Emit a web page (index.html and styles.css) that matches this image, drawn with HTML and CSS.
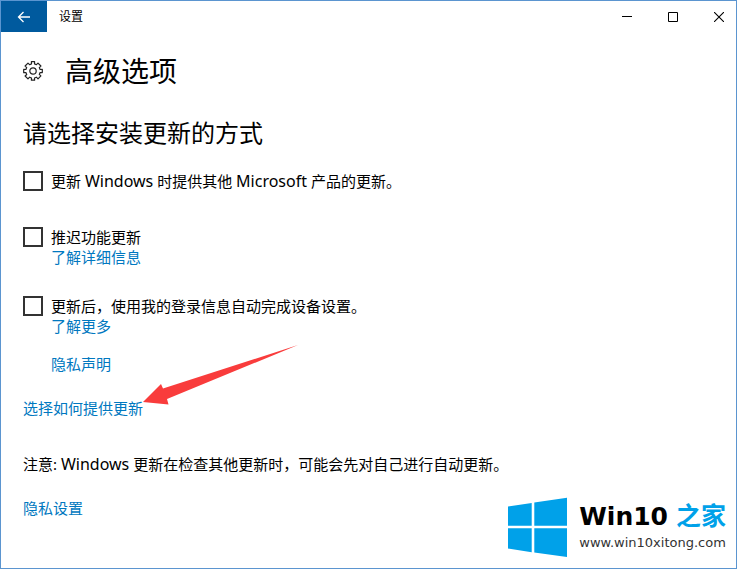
FILE: index.html
```html
<!DOCTYPE html>
<html lang="zh-CN">
<head>
  <meta charset="UTF-8">
  <meta name="viewport" content="width=device-width, initial-scale=1.0">
  <title>设置</title>
  <link rel="stylesheet" href="styles.css">
</head>
<body>
  <div class="window">
    <header class="title-bar">
      <button class="back" type="button" aria-label="返回">
        <svg width="14" height="12" viewBox="0 0 14 12"><path d="M13 6H1.500M6.500 1L1.500 6l5 5" fill="none" stroke="#fff" stroke-width="1.3"/></svg>
      </button>
      <span class="title">设置</span>
      <div class="window-controls">
        <button class="control-button" type="button" aria-label="最小化">
          <svg width="10" height="10" viewBox="0 0 10 10"><path d="M0 4.500h10" stroke="#000"/></svg>
        </button>
        <button class="control-button" type="button" aria-label="最大化">
          <svg width="10" height="10" viewBox="0 0 10 10"><path d="M.5.5h9v9h-9z" fill="none" stroke="#000"/></svg>
        </button>
        <button class="control-button" type="button" aria-label="关闭">
          <svg width="10" height="10" viewBox="0 0 10 10"><path d="M0 0l10 10M10 0L0 10" stroke="#000" stroke-width="1.1"/></svg>
        </button>
      </div>
    </header>

    <main class="content">
      <div class="page-head">
        <svg class="gear" width="20" height="20" viewBox="0 0 20 20" fill="none" stroke="#222" stroke-width="1.2" stroke-linejoin="round">
          <path d="M8.5 2.9L8.400 .7h3.2l-.1 2.2 1.9.8L15 2.100 17.900 5l-1.6 1.6.8 1.9 2.2-.1v3.2l-2.2-.1-.8 1.9 1.6 1.5-2.9 2.9-1.6-1.6-1.9.8.1 2.2H8.400l.1-2.2-1.9-.8L5 17.900 2.100 15l1.6-1.5-.8-1.9-2.2.1V8.400l2.2.1.8-1.9L2.100 5 5 2.100l1.6 1.6z"/>
          <circle cx="10" cy="10" r="3.2"/>
        </svg>
        <h1>高级选项</h1>
      </div>

      <h2>请选择安装更新的方式</h2>

      <div class="option">
        <input type="checkbox" id="other-products">
        <label for="other-products">更新 <span class="latin">Windows</span> 时提供其他 <span class="latin">Microsoft</span> 产品的更新。</label>
      </div>

      <div class="option">
        <input type="checkbox" id="defer">
        <label for="defer">推迟功能更新</label>
        <a href="#">了解详细信息</a>
      </div>

      <div class="option last">
        <input type="checkbox" id="sign-in">
        <label for="sign-in">更新后，使用我的登录信息自动完成设备设置。</label>
        <a href="#">了解更多</a>
      </div>

      <p class="indent"><a href="#">隐私声明</a></p>

      <p class="delivery">
        <a href="#">选择如何提供更新</a>
        <svg class="arrow" width="156" height="60" viewBox="0 0 156 60"><path d="M0 57L18 39l2 4.500L155 0 24 54l1.500 5.500z" fill="#f93c3c"/></svg>
      </p>

      <p class="note">注意: <span class="latin">Windows</span> 更新在检查其他更新时，可能会先对自己进行自动更新。</p>
      <p><a href="#">隐私设置</a></p>
    </main>

    <div class="brand">
      <svg width="59" height="60" viewBox="0 0 59 60" fill="#00a1e9">
        <path d="M0 9.500L23.700 6v22.800H0zM26.300 5.600L59 .7v28.100H26.300zM0 31.300h23.700v23.900L0 51.600zM26.300 31.300H59v28.600l-32.700-4.500z"/>
      </svg>
      <div class="brand-text">
        <div class="brand-name">Win10<span>之家</span></div>
        <div class="brand-url">www.win10xitong.com</div>
      </div>
    </div>
  </div>
</body>
</html>
```
FILE: styles.css
```css
* {
  box-sizing: border-box;
}

body {
  margin: 0;
  background-color: #fff;
  color: #000;
  font-family: "Noto Sans", "Noto Sans CJK SC", sans-serif;
  font-size: 15px;
  line-height: 20px;
}

.window {
  position: relative;
  min-height: 100vh;
  border: 1px solid #5b95d0;
}

.title-bar {
  display: flex;
  align-items: center;
  height: 31px;
}

.title-bar button {
  display: flex;
  align-items: center;
  justify-content: center;
  width: 46px;
  height: 31px;
  padding: 0;
  border: 0;
  background-color: transparent;
}

.title-bar .back {
  background-color: #005a9e;
}

.title {
  flex-grow: 1;
  padding-left: 12px;
  font-size: 12px;
}

.window-controls {
  display: flex;
  margin-right: -6px;
}

.content {
  padding: 19px 22px;
}

.page-head {
  display: flex;
  align-items: center;
  gap: 22px;
}

h1 {
  margin: 0;
  font-size: 28px;
  font-weight: normal;
  line-height: 40px;
}

h2 {
  margin: 26px 0 22px;
  font-size: 24px;
  font-weight: normal;
  line-height: 32px;
}

/* latin words run a little larger than the chinese text */
.latin {
  font-size: 16px;
}

.option {
  display: grid;
  grid-template-columns: 20px 1fr;
  column-gap: 8px;
  justify-items: start;
  margin-bottom: 36px;
}

.option + .last {
  margin-top: -7px;
  margin-bottom: 18px;
}

.option a {
  grid-column: 2;
}

input[type="checkbox"] {
  appearance: none;
  width: 20px;
  height: 20px;
  margin: 0;
  border: 2px solid #333;
  background-color: #fff;
}

a {
  color: #0078c0;
  text-decoration: none;
}

p {
  margin: 0 0 24px;
}

.indent {
  padding-left: 28px;
}

.delivery {
  position: relative;
  margin-bottom: 36px;
}

/* red pointer lying over the page, its tip on the link */
.arrow {
  position: absolute;
  left: 120px;
  bottom: 13px;
}

.brand {
  position: absolute;
  right: 10px;
  bottom: 11px;
  display: flex;
  align-items: center;
  gap: 12px;
}

.brand-text {
  font-family: "DejaVu Sans", "Noto Sans CJK SC", sans-serif;
}

.brand-name {
  display: flex;
  align-items: center;
  gap: 8px;
  font-size: 25px;
  font-weight: bold;
  line-height: 32px;
}

.brand-name span {
  color: #00a1e9;
}

.brand-url {
  color: #333;
  font-size: 13px;
}
```
